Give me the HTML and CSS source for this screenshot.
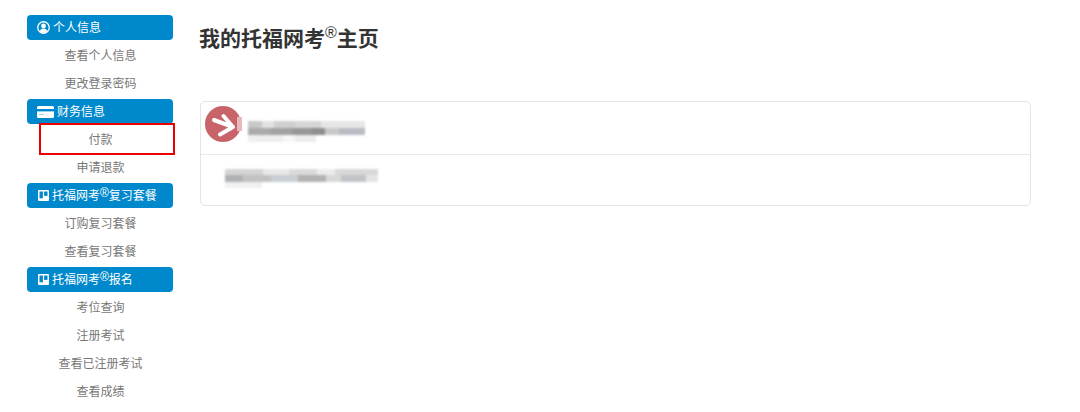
FILE: index.html
```html
<!DOCTYPE html>
<html lang="zh-CN">
<head>
    <meta charset="UTF-8">
    <title>我的托福网考主页</title>
    <link rel="stylesheet" href="styles.css">
</head>
<body>
    <div class="page">

        <!-- Side menu -->
        <nav class="side-nav">
            <div class="nav-head">
                <svg class="nav-icon" viewBox="0 0 14 14"><circle cx="7" cy="7" r="6.2" fill="none" stroke="#fff" stroke-width="1.4"/><circle cx="7" cy="5.4" r="2.6" fill="#fff"/><path d="M2.9 10.9c.6-2 2.2-2.9 4.1-2.9s3.5.9 4.1 2.9C10 12 8.6 12.6 7 12.6S4 12 2.9 10.9z" fill="#fff"/></svg>
                个人信息
            </div>
            <a class="nav-item">查看个人信息</a>
            <a class="nav-item">更改登录密码</a>

            <div class="nav-head">
                <svg class="nav-icon card" viewBox="0 0 17 12"><rect width="17" height="12" rx="1.5" fill="#fff"/><rect y="3" width="17" height="2.4" fill="#0088cc"/><rect x="2" y="8" width="5" height="1" fill="#9fd3ee"/></svg>
                财务信息
            </div>
            <a class="nav-item marked">付款</a>
            <a class="nav-item">申请退款</a>

            <div class="nav-head">
                <svg class="nav-icon board" viewBox="0 0 11 11"><rect width="11" height="11" rx="1" fill="#fff"/><rect x="1.5" y="1.5" width="3.4" height="6.8" fill="#0088cc"/><rect x="6.1" y="1.5" width="3.4" height="4.4" fill="#0088cc"/></svg>
                托福网考<sup>®</sup>复习套餐
            </div>
            <a class="nav-item">订购复习套餐</a>
            <a class="nav-item">查看复习套餐</a>

            <div class="nav-head">
                <svg class="nav-icon board" viewBox="0 0 11 11"><rect width="11" height="11" rx="1" fill="#fff"/><rect x="1.5" y="1.5" width="3.4" height="6.8" fill="#0088cc"/><rect x="6.1" y="1.5" width="3.4" height="4.4" fill="#0088cc"/></svg>
                托福网考<sup>®</sup>报名
            </div>
            <a class="nav-item">考位查询</a>
            <a class="nav-item">注册考试</a>
            <a class="nav-item">查看已注册考试</a>
            <a class="nav-item">查看成绩</a>
        </nav>

        <!-- Main content -->
        <main class="content">
            <h1 class="page-title">我的托福网考<sup>®</sup>主页</h1>

            <div class="panel">
                <div class="panel-head">
                    <svg class="badge" viewBox="0 0 36 36">
                        <circle cx="18" cy="18" r="18" fill="#c9636a"/>
                        <path d="M9 14l19 7M18.5 10l9.500 11M15 28.500l13-7.500" fill="none" stroke="#fff" stroke-width="4" stroke-linecap="round" stroke-linejoin="round"/>
                    </svg>
                    <div class="badge-edge"></div>
                    <div class="smudge smudge-name"></div>
                </div>
                <div class="panel-body">
                    <div class="smudge smudge-line"></div>
                </div>
            </div>
        </main>

    </div>
</body>
</html>
```

FILE: styles.css
```css
/* Basic Styles */
html, body {
    margin: 0;
    height: 412px;
    overflow: hidden;
    background-color: #fff;
}

body {
    font-family: "Liberation Sans", "Noto Sans CJK SC", sans-serif;
    font-size: 12px;
    color: #777;
}

.page {
    display: flex;
    padding: 13px 0 0 27px;
}

/* Side menu */
.side-nav {
    width: 146px;
    flex-shrink: 0;
}

.nav-head {
    display: flex;
    align-items: center;
    height: 24px;
    margin: 2px 0 1px;
    padding: 1px 0 0 11px;
    background-color: #0088cc;
    border-radius: 4px;
    color: #fff;
    line-height: 24px;
    white-space: nowrap;
}

.nav-head sup {
    font-size: 12px;
    line-height: 1;
    margin-top: -7px;
}

.nav-icon {
    width: 13px;
    height: 13px;
    margin: 0 3px 1px -1px;
}

.nav-icon.card {
    width: 17px;
    height: 12px;
}

.nav-icon.board {
    width: 11px;
    height: 11px;
    margin-left: 0;
}

.nav-item {
    display: block;
    position: relative;
    height: 28px;
    padding-left: 1px;
    line-height: 30px;
    text-align: center;
}

/* Red annotation around a menu item */
.nav-item.marked::after {
    content: "";
    position: absolute;
    left: 12px;
    right: -2px;
    top: -2px;
    bottom: -2px;
    border: 2px solid #ea0000;
}

/* Main content */
.content {
    flex: 1;
    padding-left: 26px;
}

.page-title {
    display: flex;
    margin: 9px 0 0;
    height: 34px;
    font-size: 21px;
    line-height: 34px;
    font-weight: bold;
    color: #333;
}

.page-title sup {
    font-size: 16px;
    font-weight: normal;
    line-height: 1;
    margin-top: 3px;
}

.panel {
    width: 829px;
    margin: 45px 0 0 1px;
    border: 1px solid #e4e4e4;
    border-radius: 5px;
}

.panel-head {
    display: flex;
    align-items: center;
    height: 52px;
    padding-left: 4px;
    border-bottom: 1px solid #e9e9e9;
}

.badge {
    width: 36px;
    height: 36px;
    margin-top: -8px;
}

.badge-edge {
    width: 5px;
    height: 14px;
    margin: -8px 6px 0 -4px;
    background-color: #e6b9ba;
}

.panel-body {
    display: flex;
    align-items: center;
    height: 50px;
    padding-left: 24px;
}

/* Blurred-out personal details */
.smudge {
    filter: blur(1.1px);
    background-repeat: no-repeat;
}

.smudge-name {
    width: 117px;
    height: 21px;
    margin-top: 7px;
    background-image:
        linear-gradient(90deg, #c8c8c8 0 12%, #e2e2e2 12% 22%, #cfcfcf 22% 40%, #d6d6d6 40% 62%, #e6e6e6 62% 100%),
        linear-gradient(90deg, #ababab 0 20%, #a2a2a2 20% 38%, #979797 38% 55%, #8e8e8e 55% 66%, #c9c9c9 66% 78%, #b7bcc2 78% 100%),
        linear-gradient(90deg, #efefef 0 30%, #f7f7f7 30% 40%, #ececec 40% 58%, #fff 58%);
    background-size: 100% 7px, 100% 7px, 100% 7px;
    background-position: 0 0, 0 7px, 0 14px;
}

.smudge-line {
    width: 153px;
    height: 19px;
    margin-top: -3px;
    background-image:
        linear-gradient(90deg, #d4d4d4 0 25%, #e8e8e8 25% 42%, #dadada 42% 60%, #ececec 60% 72%, #d8d8d8 72% 100%),
        linear-gradient(90deg, #aeb2b5 0 12%, #c2c2c2 12% 30%, #c9ced2 30% 48%, #b2b2b2 48% 66%, #d8d8d8 66% 76%, #c0c4c8 76% 92%, #e4e4e4 92% 100%),
        linear-gradient(90deg, #f0f0f0 0 24%, #fff 24%);
    background-size: 100% 6px, 100% 7px, 100% 6px;
    background-position: 0 0, 0 6px, 0 13px;
}
```
